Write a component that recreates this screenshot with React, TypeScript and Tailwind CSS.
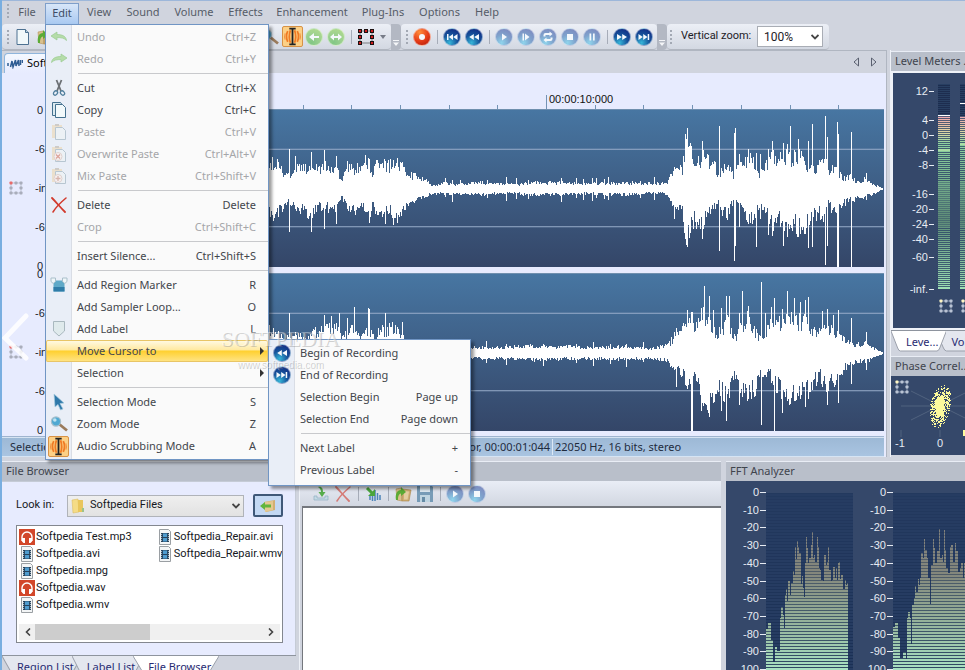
import { ReactNode } from 'react';
import clsx from 'clsx';

// ** Types **
type EnvelopePoint = [number, number, number];

interface MenuEntry {
  label: string;
  keys?: string;
  icon?: ReactNode;
  disabled?: boolean;
  hasSubmenu?: boolean;
  active?: boolean;
}

// ** Helpers **
const createRandom = (seed: number) => {
  let state = seed;
  return () => {
    state = (state * 16807) % 2147483647;
    return state / 2147483647;
  };
};

const buildWavePath = (envelope: EnvelopePoint[], spikes: EnvelopePoint[], seed: number) => {
  const random = createRandom(seed);
  let path = '';
  let index = 0;
  for (let x = envelope[0][0]; x < 884; x += 1) {
    while (index < envelope.length - 2 && x >= envelope[index + 1][0]) index += 1;
    const [x0, up0, down0] = envelope[index];
    const [x1, up1, down1] = envelope[index + 1];
    const ratio = (x - x0) / (x1 - x0);
    const spike = spikes.find((item) => item[0] === x);
    const up = Math.max((up0 + (up1 - up0) * ratio) * (0.6 + random() * 0.55), spike ? spike[1] : 0);
    const down = Math.max((down0 + (down1 - down0) * ratio) * (0.6 + random() * 0.55), spike ? spike[2] : 0);
    path += `M${x} ${Math.round(79 - up)}h1V${Math.round(80 + down)}h-1z`;
  }
  return path;
};

// ** Wave data: x, height above the axis, height below the axis **
const LEFT_ENVELOPE: EnvelopePoint[] = [
  [48, 20, 20], [271, 29, 28], [277, 28, 29], [280, 25, 25], [285, 15, 15], [292, 17, 17], [297, 22, 23], [305, 23, 26],
  [311, 22, 30], [318, 22, 19], [325, 24, 20], [330, 19, 22], [336, 22, 24], [341, 10, 10], [347, 24, 19],
  [355, 21, 24], [363, 28, 22], [369, 30, 28], [372, 15, 20], [376, 27, 24], [383, 26, 25], [390, 27, 26],
  [398, 28, 31], [403, 23, 26], [408, 16, 16], [415, 14, 12], [422, 11, 9], [428, 7, 7], [433, 4, 5],
  [445, 7, 6], [452, 5, 6], [465, 6, 5], [475, 8, 6], [485, 7, 6], [500, 6, 5], [515, 5, 5], [530, 7, 7],
  [545, 7, 6], [562, 7, 6], [575, 6, 5], [600, 6, 6], [625, 7, 6], [645, 6, 5], [660, 6, 4], [667, 8, 6],
  [671, 16, 14], [676, 20, 18], [682, 22, 24], [685, 48, 50], [690, 46, 50], [693, 22, 36], [698, 30, 35],
  [703, 34, 36], [708, 32, 28], [714, 28, 20], [718, 12, 12], [722, 25, 26], [728, 24, 28], [733, 14, 14],
  [738, 26, 20], [744, 26, 30], [748, 40, 42], [752, 34, 32], [757, 18, 22], [763, 18, 22], [768, 32, 30],
  [772, 40, 42], [776, 28, 30], [783, 42, 46], [790, 34, 36], [797, 38, 42], [804, 30, 42], [810, 20, 32],
  [818, 26, 26], [824, 36, 30], [829, 14, 14], [832, 22, 24], [838, 20, 24], [843, 12, 16], [850, 13, 12],
  [855, 10, 12], [859, 7, 8], [865, 12, 9], [870, 6, 7], [876, 4, 4], [884, 0, 0],
];

const LEFT_SPIKES: EnvelopePoint[] = [
  [289, 40, 43], [295, 33, 20], [311, 37, 43], [324, 39, 40], [336, 33, 35], [347, 28, 0], [365, 34, 0], [369, 30, 34],
  [385, 28, 35], [393, 28, 36], [401, 26, 20], [445, 11, 8], [452, 9, 13], [460, 9, 6], [487, 9, 9], [506, 12, 12], [516, 11, 10],
  [528, 9, 10], [561, 11, 13], [576, 11, 9], [583, 10, 11], [592, 11, 12], [596, 11, 9], [604, 10, 10], [608, 12, 11],
  [640, 8, 9], [654, 12, 11], [674, 22, 30], [686, 50, 55], [687, 61, 58], [702, 48, 50], [719, 63, 62], [734, 56, 72], [735, 61, 57],
  [739, 35, 38], [756, 36, 58], [760, 35, 30], [768, 40, 46], [772, 48, 40], [783, 42, 57], [787, 45, 48], [790, 63, 34],
  [798, 50, 48], [808, 48, 59], [812, 65, 58], [825, 73, 76], [827, 52, 57], [837, 67, 78], [838, 55, 78], [851, 57, 78],
  [866, 16, 11],
];

const RIGHT_ENVELOPE: EnvelopePoint[] = [
  [48, 20, 20], [271, 28, 20], [277, 25, 20], [285, 15, 18], [292, 20, 18], [299, 18, 20], [308, 16, 20], [318, 26, 22],
  [325, 30, 22], [337, 30, 22], [341, 14, 14], [347, 22, 20], [353, 26, 20], [360, 14, 16], [368, 30, 20],
  [373, 18, 16], [383, 26, 20], [392, 27, 22], [402, 22, 20], [407, 13, 14], [415, 13, 10], [425, 10, 8],
  [433, 5, 5], [470, 6, 6], [500, 6, 6], [530, 8, 8], [562, 7, 7], [600, 6, 6], [625, 7, 7], [650, 5, 6],
  [665, 8, 8], [670, 12, 12], [676, 22, 20], [682, 24, 26], [687, 36, 30], [692, 30, 26], [698, 32, 42],
  [704, 42, 48], [711, 32, 60], [717, 20, 40], [722, 28, 42], [727, 36, 44], [732, 20, 28], [736, 16, 22],
  [741, 30, 40], [748, 44, 46], [753, 26, 44], [758, 18, 32], [764, 20, 20], [770, 30, 24], [776, 30, 36],
  [783, 40, 50], [790, 36, 46], [797, 34, 44], [805, 38, 46], [812, 24, 34], [820, 22, 26], [826, 30, 34],
  [833, 26, 32], [840, 22, 24], [845, 12, 16], [855, 9, 10], [865, 11, 10], [872, 6, 7], [884, 0, 0],
];

const RIGHT_SPIKES: EnvelopePoint[] = [
  [289, 40, 30], [324, 38, 30], [331, 37, 20], [339, 40, 24], [347, 35, 24], [354, 46, 30], [368, 45, 25], [369, 44, 25],
  [385, 40, 25], [402, 31, 20], [486, 12, 10], [506, 9, 12], [543, 9, 13], [576, 9, 10], [593, 11, 13], [610, 9, 11],
  [626, 9, 14], [643, 11, 9], [676, 25, 34], [687, 43, 36], [691, 41, 78], [692, 41, 78], [701, 45, 58], [704, 67, 50], [709, 57, 64],
  [713, 43, 50], [721, 45, 58], [726, 57, 68], [729, 57, 45], [739, 40, 52], [742, 62, 44], [748, 44, 46], [761, 71, 72],
  [765, 40, 22], [771, 46, 30], [774, 55, 78], [782, 44, 60], [787, 62, 48], [794, 55, 48], [800, 51, 46], [805, 53, 54],
  [808, 56, 46], [822, 42, 34], [827, 44, 52], [833, 38, 30], [838, 43, 50], [851, 35, 31], [866, 21, 17],
];

// ** Spectrum data: x and y in thirds of a pixel **
const LEFT_SPECTRUM = [
  [0, 408], [7, 391], [15, 440], [21, 480], [22, 508], [27, 463], [34, 475], [42, 376], [45, 342], [51, 366], [54, 406],
  [57, 306], [60, 288], [63, 324], [66, 264], [72, 306], [75, 271], [81, 234], [84, 246], [87, 163], [90, 198],
  [93, 145], [96, 163], [100, 181], [104, 274], [108, 248], [111, 286], [114, 311], [117, 211], [120, 133], [123, 166],
  [126, 209], [130, 196], [134, 156], [138, 116], [141, 196], [145, 186], [148, 206], [152, 133], [155, 163],
  [158, 226], [162, 231], [165, 261], [170, 264], [174, 186], [179, 216], [183, 206], [186, 163], [189, 231],
  [194, 264], [199, 261], [202, 223], [206, 256], [209, 226], [212, 261], [215, 211], [218, 206], [222, 258],
  [226, 246], [231, 288], [236, 261], [240, 276], [243, 271], [246, 540],
];

const RIGHT_SPECTRUM = [
  [0, 401], [6, 391], [15, 436], [21, 494], [31, 476], [39, 498], [42, 376], [46, 356], [51, 376], [54, 454], [57, 336],
  [62, 316], [65, 278], [70, 296], [74, 258], [79, 276], [82, 256], [85, 181], [90, 196], [92, 138], [96, 171],
  [101, 196], [106, 256], [110, 334], [115, 216], [119, 138], [122, 166], [126, 211], [132, 174], [137, 109],
  [140, 196], [146, 186], [150, 206], [152, 111], [155, 171], [160, 226], [165, 241], [170, 161], [175, 156],
  [179, 206], [185, 151], [190, 174], [194, 236], [200, 226], [205, 211], [210, 256], [214, 211], [262, 540],
];

// ** Icons **
const BALL_TONES = {
  blue: 'bg-[radial-gradient(circle_at_35%_85%,#35b5d8,#16549b_45%,#10207e)]',
  pale: 'bg-[radial-gradient(circle_at_35%_85%,#8fd4ec,#7fa2cc_45%,#7c83bc)]',
  green: 'bg-[radial-gradient(circle_at_35%_85%,#82c784,#9bd090_45%,#b5dd8e)]',
  red: 'bg-[radial-gradient(circle_at_35%_20%,#ff8d3a,#e8401a_50%,#b01505)]',
};

const Ball = ({ tone, glyph }: { tone: keyof typeof BALL_TONES; glyph: ReactNode }) => (
  <span className={clsx('block w-[18px] h-[18px] rounded-full border border-white/50', BALL_TONES[tone])}>
    <svg viewBox="0 0 16 16" className="w-full h-full" fill="#f4f8fc">
      {glyph}
    </svg>
  </span>
);

const GLYPHS = {
  record: <circle cx="8" cy="8" r="3" />,
  begin: <path d="M3 5h1.5v6H3zM9 5v6L4.8 8zM13.5 5v6L9.2 8z" />,
  rewind: <path d="M7.8 5v6L3.2 8zM13 5v6L8.2 8z" />,
  play: <path d="M6 4.5v7L11 8z" />,
  playFrom: <path d="M4.5 4.5H6v7H4.5zM7 4.5v7L11.5 8z" />,
  loop: <path d="M3.5 7.5V6A2 2 0 0 1 5.5 4h4V2.5L12.5 5l-3 2.5V6h-4v1.5zM12.5 8.5V10a2 2 0 0 1-2 2h-4v1.5L3.5 11l3-2.5V10h4V8.5z" />,
  stop: <path d="M5 5h6v6H5z" />,
  pause: <path d="M5.5 4.5h1.7v7H5.5zM9 4.5h1.7v7H9z" />,
  forward: <path d="M3 5v6l4.8-3zM8.2 5v6L13 8z" />,
  end: <path d="M2.5 5v6l4.3-3zM7.2 5v6l4.3-3zM11.7 5h1.5v6h-1.5z" />,
  left: <path d="M8 4v3h5v2H8v3L3 8z" />,
  both: <path d="M6 4.5V7h4V4.5L14 8l-4 3.5V9H6v2.5L2 8z" />,
};

const PageIcon = () => (
  <svg viewBox="0 0 16 18" className="w-4 h-[18px]">
    <path d="M2 1.5h8.5l3 3v12H2z" fill="#f1f8fa" stroke="#4d7191" />
    <path d="M10.5 1.5v3h3" fill="#b8d2df" stroke="#4d7191" />
  </svg>
);

const FolderIcon = () => (
  <svg viewBox="0 0 18 18" className="w-[18px] h-[18px]">
    <path d="M2 4l5-1 1 13-5-1z" fill="#d9c08c" stroke="#b3945a" strokeWidth=".6" />
    <path d="M8 4l9 1-2 11H8z" fill="#cfae74" stroke="#a98343" strokeWidth=".6" />
    <path d="M10 6l5 .5-1.500 8H10z" fill="#e3cda0" />
    <path d="M2 15C1 9 3 5 7 5V2l5 5-5 4V8.500C4.500 9 4 12 4 15z" fill="#5cab35" />
  </svg>
);

const UndoIcon = ({ flip }: { flip?: boolean }) => (
  <svg viewBox="0 0 18 12" className={clsx('w-[18px] h-3', flip && '-scale-x-100')}>
    <path d="M1 5l6-4v2.500c5 0 9 1.500 9.500 6C14 7 11 6.500 7 6.600V9z" fill="#b5dca9" stroke="#9acb91" strokeWidth=".7" />
  </svg>
);

const CutIcon = () => (
  <svg viewBox="0 0 14 18" className="w-3.5 h-[18px]" fill="none">
    <path d="M4.500 1l4.500 11M9.500 1L5 12" stroke="#6d7175" strokeWidth="1.800" />
    <ellipse cx="3.500" cy="14" rx="1.800" ry="2.400" stroke="#4f7e9c" strokeWidth="1.300" transform="rotate(40 3.500 14)" />
    <ellipse cx="10.500" cy="14" rx="1.800" ry="2.400" stroke="#4f7e9c" strokeWidth="1.300" transform="rotate(-40 10.500 14)" />
  </svg>
);

const CopyIcon = () => (
  <svg viewBox="0 0 16 18" className="w-4 h-[18px]" stroke="#44718f">
    <path d="M1.500 1.500h8l1.500 2v11h-9.500z" fill="#dceaf0" />
    <path d="M4.500 3.500h7l3 3v10h-10z" fill="#f2f9fb" />
  </svg>
);

const PasteIcon = ({ mark }: { mark?: 'cross' | 'plus' }) => (
  <svg viewBox="0 0 18 18" className="w-[18px] h-[18px] opacity-75">
    <path d="M2 2h10v13H2z" fill="#ecdcc0" />
    <path d="M5 1h4v2H5z" fill="#c5c0b8" />
    <path d="M5.500 4.500h7l3 3v9h-10z" fill="#eef3f5" stroke="#a7b9c5" />
    {mark && <circle cx="8" cy="11.500" r="4" fill="#faf3f0" stroke="#dcc8c2" />}
    {mark === 'cross' && <path d="M6 9.500l4 4M10 9.500l-4 4" stroke="#d98a7c" strokeWidth="1.300" />}
    {mark === 'plus' && <path d="M8 9v5M5.500 11.500h5" stroke="#d3a296" strokeWidth="1.300" />}
  </svg>
);

const DeleteIcon = ({ faded }: { faded?: boolean }) => (
  <svg viewBox="0 0 16 16" className={clsx('w-4 h-4', faded && 'opacity-60')} fill="none" stroke="#d23a2c" strokeLinecap="round">
    <path d="M1 1c4 4 8 9 13 14" strokeWidth="1.800" />
    <path d="M15 1C9 6 5 10 2 15" strokeWidth="1.500" />
  </svg>
);

const RegionMarkerIcon = () => (
  <svg viewBox="0 0 18 16" className="w-[18px] h-4">
    <path d="M3.500 3.500h11v11h-11z" fill="#5fa9c8" />
    <path d="M3.500 10h11v4.500h-11z" fill="#2f7ca8" />
    <path d="M1 1h4.500v3.500L3.200 6.500 1 4.500zM12.500 1H17v3.500l-2.200 2-2.300-2z" fill="#eff6f9" stroke="#a9bfca" />
  </svg>
);

const LabelIcon = () => (
  <svg viewBox="0 0 14 18" className="w-3.5 h-[18px]">
    <path d="M1.500 1.500h11V11L7 16 1.500 11z" fill="#dfeaec" stroke="#a9b8bf" />
  </svg>
);

const PointerIcon = () => (
  <svg viewBox="0 0 14 18" className="w-3.5 h-[18px]">
    <path d="M2 1l10 9-4 .500L11 16l-2.500 1L6 11.500 3 14z" fill="#2f79aa" stroke="#a6cbe0" strokeWidth=".7" />
  </svg>
);

const MagnifierIcon = () => (
  <svg viewBox="0 0 18 16" className="w-[18px] h-4">
    <path d="M9 8l8 6.500" stroke="#9a7b5c" strokeWidth="2.800" />
    <circle cx="6" cy="5.500" r="4.600" fill="#4fa9d3" stroke="#a5bfcd" strokeWidth="1.200" />
    <circle cx="4.800" cy="4" r="1.800" fill="#bfe3f1" />
  </svg>
);

const ScrubIcon = () => (
  <span className="block w-[21px] h-[21px] bg-[#fcd086] border border-[#d79246] rounded-xs">
    <svg viewBox="0 0 18 18" className="w-full h-full" fill="none">
      <path d="M4.500 4Q2 9 4.500 14M7 3Q5 9 7 15M13.500 4Q16 9 13.500 14M11 3Q13 9 11 15" stroke="#f07a22" strokeWidth="1.700" />
      <path d="M2 6Q1 9 2 12M16 6Q17 9 16 12" stroke="#f3913f" />
      <path d="M6 1.500h6M6 16.500h6M9 1.500v15" stroke="#222" strokeWidth="1.700" />
    </svg>
  </span>
);

// ** Eight small squares joined by a thin frame **
const ChannelGrid = ({ tone = '#b9c3d4', first = '#fff6c4', last = '#b9c3d4' }) => (
  <svg viewBox="0 0 14 14" className="w-3.5 h-3.5 shrink-0">
    <path d="M2 2h10v10H2z" fill="none" stroke={tone} strokeWidth=".6" />
    {[[0, 0], [5, 0], [10, 0], [0, 5], [10, 5], [0, 10], [5, 10], [10, 10]].map(([x, y], index) => (
      <rect
        key={`${x}-${y}`}
        x={x + 0.5}
        y={y + 0.5}
        width="3"
        height="3"
        rx=".8"
        fill={index === 0 ? first : index === 2 ? last : tone}
      />
    ))}
  </svg>
);

const RegionGridIcon = () => (
  <svg viewBox="0 0 18 18" className="w-[18px] h-[18px]">
    <path d="M3 3h12v12H3z" fill="none" stroke="#555" strokeWidth=".7" />
    {[[1, 1], [7, 1], [13, 1], [1, 7], [13, 7], [1, 13], [13, 13]].map(([x, y]) => (
      <g key={`${x}-${y}`}>
        <rect x={x} y={y} width="4" height="4" fill="#1c1010" />
        <rect x={x + 1} y={y + 1} width="2" height="2" fill="#d01c1c" />
      </g>
    ))}
  </svg>
);

const AudioFileIcon = () => (
  <svg viewBox="0 0 16 16" className="w-4 h-4 shrink-0">
    <path d="M0 0h16v16H0z" fill="#d2472a" />
    <path d="M3 12V8a5 5 0 0 1 10 0v4" fill="none" stroke="#fff" strokeWidth="1.400" />
    <path d="M3 9h3v5H4.500L3 12.500zM10 9h3v3.500L11.500 14H10z" fill="#fff" />
  </svg>
);

const VideoFileIcon = () => (
  <svg viewBox="0 0 16 16" className="w-4 h-4 shrink-0">
    <path d="M2.500.500h9l2 2v13h-11z" fill="#f3f5f6" stroke="#9a9fa3" />
    <path d="M4 4h8v9H4z" fill="#25425c" />
    <path d="M6 4.500h4V8H6zM6 9h4v3.500H6z" fill="#4f9ccf" />
    <path d="M4.600 5v7M11.400 5v7" stroke="#dfe6ea" strokeWidth=".8" strokeDasharray="1 1" />
  </svg>
);

const SaveIcon = () => (
  <svg viewBox="0 0 18 18" className="w-[18px] h-[18px] opacity-80">
    <path d="M1 1h15l1 1v15H1z" fill="#5e8bab" />
    <path d="M4 1h10v6H4z" fill="#dceaf1" />
    <path d="M4 10h10v7H4z" fill="#b9d3e0" />
    <path d="M6 12h3v5H6z" fill="#4a7896" />
  </svg>
);

const AddToListIcon = () => (
  <svg viewBox="0 0 18 16" className="w-[18px] h-4">
    <path d="M2 10v4h14v-4h-3v2H5v-2z" fill="#c5dbe5" stroke="#8fb0c1" strokeWidth=".7" />
    <path d="M6 1c4-1 5 2 5 5h2.500L10 11 6.500 6H9c0-2-1-4-3-5z" fill="#57ad4c" />
  </svg>
);

const WaveOpenIcon = () => (
  <svg viewBox="0 0 18 16" className="w-[18px] h-4" fill="none">
    <path d="M6 10v4M8.500 8v7M11 4v11M13.500 7v7M16 9v5" stroke="#4b83b8" strokeWidth="1.500" />
    <path d="M3 2l6 6" stroke="#4aa53c" strokeWidth="3" />
    <path d="M11 3v7H4z" fill="#4aa53c" />
  </svg>
);

// ** Shared pieces **
const Grip = () => (
  <span className="flex flex-col gap-0.5 px-[3px]">
    {[0, 1, 2, 3].map((dot) => (
      <span key={dot} className="w-0.5 h-0.5 bg-[#a3a9b4]" />
    ))}
  </span>
);

const Divider = () => <span className="w-2 h-3.5 flex justify-center before:w-px before:h-full before:bg-[#a6acb8]" />;

const Chevron = () => (
  <svg viewBox="0 0 8 6" className="absolute right-1 w-2 h-1.5 pointer-events-none" fill="none" stroke="#444" strokeWidth="1.800">
    <path d="M.500 1L4 4.500 7.500 1" />
  </svg>
);

const ToolButton = ({ label, children }: { label: string; children: ReactNode }) => (
  <button aria-label={label} className="w-[22px] h-[22px] flex items-center justify-center shrink-0">
    {children}
  </button>
);

const Overflow = () => (
  <button aria-label="Toolbar options" className="w-2.5 h-[26px] bg-[#b3b8c3] rounded-r-sm flex items-end justify-center pb-1">
    <svg viewBox="0 0 6 6" className="w-1.5 h-1.5" fill="#f4f5f8">
      <path d="M0 0h6v1H0zM0 2.500h6L3 6z" />
    </svg>
  </button>
);

const PanelTitle = ({ title, closable }: { title: string; closable?: boolean }) => (
  <h2 className="h-5 shrink-0 px-1 flex items-center justify-between bg-[#b9bfca] border-t border-[#e9edf5] text-[11px] text-[#3f444d] whitespace-nowrap overflow-hidden">
    {title}
    {closable && (
      <button aria-label={`Close ${title || 'panel'}`}>
        <svg viewBox="0 0 9 9" className="w-[9px] h-[9px]" stroke="#6b7079" strokeWidth="1.400">
          <path d="M1 1l7 7M8 1L1 8" />
        </svg>
      </button>
    )}
  </h2>
);

const MenuPanel = ({ groups, children, className }: { groups: MenuEntry[][]; children?: ReactNode; className: string }) => (
  <div
    role="menu"
    className={clsx(
      'absolute z-10 border border-[#7095c4] shadow-[3px_3px_3px_#00000066] bg-[linear-gradient(to_right,#e9eef7_25px,#d9dde5_25px,#d9dde5_26px,#fafafa_26px)]',
      className,
    )}
  >
    {groups.map((group, index) => (
      <div key={group[0].label}>
        {index > 0 && <div className="h-[7px] ml-8 flex items-center before:h-px before:w-full before:bg-[#c8c9cc]" />}
        {group.map((entry) => (
          <button
            key={entry.label}
            role="menuitem"
            disabled={entry.disabled}
            className={clsx(
              'w-full h-[22px] flex items-center text-[11px] whitespace-nowrap',
              entry.disabled ? 'text-[#a5a6a9]' : 'text-[#43464c]',
              entry.active && 'rounded-xs shadow-[inset_0_0_0_1px_#e8c566] bg-[linear-gradient(#fffbe8,#ffe9a0_45%,#ffd02f_50%,#ffe58a)]',
            )}
          >
            <span className="w-[25px] flex justify-center">{entry.icon}</span>
            <span className="pl-1.5 flex-1 text-left">{entry.label}</span>
            <span className={entry.hasSubmenu ? 'pr-1' : 'pr-3'}>
              {entry.hasSubmenu ? (
                <svg viewBox="0 0 4 8" className="w-1 h-2" fill="#333">
                  <path d="M0 0l4 4-4 4z" />
                </svg>
              ) : (
                entry.keys
              )}
            </span>
          </button>
        ))}
      </div>
    ))}
    {children}
  </div>
);

const EDIT_MENU: MenuEntry[][] = [
  [
    { label: 'Undo', keys: 'Ctrl+Z', disabled: true, icon: <UndoIcon /> },
    { label: 'Redo', keys: 'Ctrl+Y', disabled: true, icon: <UndoIcon flip /> },
  ],
  [
    { label: 'Cut', keys: 'Ctrl+X', icon: <CutIcon /> },
    { label: 'Copy', keys: 'Ctrl+C', icon: <CopyIcon /> },
    { label: 'Paste', keys: 'Ctrl+V', disabled: true, icon: <PasteIcon /> },
    { label: 'Overwrite Paste', keys: 'Ctrl+Alt+V', disabled: true, icon: <PasteIcon mark="cross" /> },
    { label: 'Mix Paste', keys: 'Ctrl+Shift+V', disabled: true, icon: <PasteIcon mark="plus" /> },
  ],
  [
    { label: 'Delete', keys: 'Delete', icon: <DeleteIcon /> },
    { label: 'Crop', keys: 'Ctrl+Shift+C', disabled: true },
  ],
  [{ label: 'Insert Silence...', keys: 'Ctrl+Shift+S' }],
  [
    { label: 'Add Region Marker', keys: 'R', icon: <RegionMarkerIcon /> },
    { label: 'Add Sampler Loop...', keys: 'O' },
    { label: 'Add Label', keys: 'L', icon: <LabelIcon /> },
    { label: 'Move Cursor to', hasSubmenu: true, active: true },
    { label: 'Selection', hasSubmenu: true },
  ],
  [
    { label: 'Selection Mode', keys: 'S', icon: <PointerIcon /> },
    { label: 'Zoom Mode', keys: 'Z', icon: <MagnifierIcon /> },
    { label: 'Audio Scrubbing Mode', keys: 'A', icon: <ScrubIcon /> },
  ],
];

const CURSOR_MENU: MenuEntry[][] = [
  [
    { label: 'Begin of Recording', icon: <Ball tone="blue" glyph={GLYPHS.rewind} /> },
    { label: 'End of Recording', icon: <Ball tone="blue" glyph={GLYPHS.end} /> },
    { label: 'Selection Begin', keys: 'Page up' },
    { label: 'Selection End', keys: 'Page down' },
  ],
  [
    { label: 'Next Label', keys: '+' },
    { label: 'Previous Label', keys: '-' },
  ],
];

const MENU_BAR = [
  { label: 'File', width: 'w-9' },
  { label: 'Edit', width: 'w-[34px]' },
  { label: 'View', width: 'w-10' },
  { label: 'Sound', width: 'w-12' },
  { label: 'Volume', width: 'w-[54px]' },
  { label: 'Effects', width: 'w-[49px]' },
  { label: 'Enhancement', width: 'w-[84px]' },
  { label: 'Plug-Ins', width: 'w-[58px]' },
  { label: 'Options', width: 'w-[55px]' },
  { label: 'Help', width: 'w-10' },
];

const MenuBar = () => (
  <nav className="h-6 flex items-end pl-[5px] border-t border-[#9db7da] text-[11px] text-[#565c68]">
    <span className="pb-1.5 -mx-[3px]">
      <Grip />
    </span>
    {MENU_BAR.map(({ label, width }) => (
      <div key={label} className={clsx('relative h-[21px]', width)}>
        <button
          className={clsx(
            'w-full h-full pb-0.5 text-center',
            label === 'Edit' && 'bg-linear-to-b from-[#d8e6f8] to-[#a9c9f1] border border-b-0 border-[#7f9fca] text-[#3d4c66]',
          )}
        >
          {label}
        </button>
        {label === 'Edit' && (
          <MenuPanel groups={EDIT_MENU} className="left-0 top-full w-56 pt-px pb-0.5">
            <MenuPanel groups={CURSOR_MENU} className="left-[222px] top-[314px] w-[203px] pt-0.5 pb-1" />
          </MenuPanel>
        )}
      </div>
    ))}
  </nav>
);

const Toolbars = () => {
  const barClass = 'h-[26px] flex items-center rounded-sm bg-linear-to-b from-[#eceff6] to-[#d3d8e2] border-b border-[#b1b6c0]';
  return (
    <div className="flex h-[26px]">
      <div className={clsx(barClass, 'pl-0.5 w-[389px]')}>
        <Grip />
        <ToolButton label="New"><PageIcon /></ToolButton>
        <ToolButton label="Open"><FolderIcon /></ToolButton>
        <div className="ml-auto flex items-center pr-0.5">
          <ToolButton label="Zoom mode"><MagnifierIcon /></ToolButton>
          <ToolButton label="Scrubbing mode"><ScrubIcon /></ToolButton>
          <ToolButton label="Back"><Ball tone="green" glyph={GLYPHS.left} /></ToolButton>
          <ToolButton label="Fit"><Ball tone="green" glyph={GLYPHS.both} /></ToolButton>
          <Divider />
          <ToolButton label="Channels"><RegionGridIcon /></ToolButton>
          <button aria-label="Channel options" className="w-3 flex justify-center">
            <svg viewBox="0 0 6 4" className="w-1.5 h-1" fill="#777c88"><path d="M0 0h6L3 4z" /></svg>
          </button>
        </div>
      </div>
      <Overflow />
      <div className={clsx(barClass, 'pl-0.5 pr-0.5')}>
        <Grip />
        <ToolButton label="Record"><Ball tone="red" glyph={GLYPHS.record} /></ToolButton>
        <Divider />
        <ToolButton label="Go to begin"><Ball tone="blue" glyph={GLYPHS.begin} /></ToolButton>
        <ToolButton label="Rewind"><Ball tone="blue" glyph={GLYPHS.rewind} /></ToolButton>
        <Divider />
        <ToolButton label="Play"><Ball tone="pale" glyph={GLYPHS.play} /></ToolButton>
        <ToolButton label="Play from cursor"><Ball tone="pale" glyph={GLYPHS.playFrom} /></ToolButton>
        <ToolButton label="Loop"><Ball tone="pale" glyph={GLYPHS.loop} /></ToolButton>
        <ToolButton label="Stop"><Ball tone="pale" glyph={GLYPHS.stop} /></ToolButton>
        <ToolButton label="Pause"><Ball tone="pale" glyph={GLYPHS.pause} /></ToolButton>
        <Divider />
        <ToolButton label="Fast forward"><Ball tone="blue" glyph={GLYPHS.forward} /></ToolButton>
        <ToolButton label="Go to end"><Ball tone="blue" glyph={GLYPHS.end} /></ToolButton>
      </div>
      <Overflow />
      <div className={clsx(barClass, "pr-1.5 text-[11px] text-[#1d2026] font-['Roboto',sans-serif]")}>
        <Grip />
        <label htmlFor="vertical-zoom" className="pl-1.5 w-[82px] whitespace-nowrap">Vertical zoom:</label>
        <span className="relative flex items-center">
          <select id="vertical-zoom" className="appearance-none w-[66px] h-[21px] pl-1.5 bg-white border border-[#a9adb5] text-[12px]">
            <option>100%</option>
          </select>
          <Chevron />
        </span>
      </div>
    </div>
  );
};

const Scale = () => (
  <div className="w-[54px] pl-[7px] h-[158px] flex items-center gap-3 font-['Liberation_Sans',sans-serif] text-[11px] text-[#20242c]">
    <ChannelGrid tone="#a9adbb" first="#e86a6a" last="#a9adbb" />
    <span className="h-[168px] -my-1 flex flex-col justify-between leading-3 shrink-0">
      <span className="pl-0.5">0</span>
      <span>-6</span>
      <span>-inf.</span>
      <span>-6</span>
      <span className="pl-0.5">0</span>
    </span>
  </div>
);

const Wave = ({ path }: { path: string }) => (
  <div className="flex">
    <Scale />
    <svg
      viewBox="56 0 828 158"
      preserveAspectRatio="none"
      className="flex-1 min-w-0 h-[158px] bg-linear-to-b from-[#4776a2] to-[#344668] border-t border-[#6f8fae]"
      shapeRendering="crispEdges"
    >
      <path d="M48 39.500H884M48 117.500H884" stroke="#9aaecb" />
      <path d={path} fill="#fff" />
    </svg>
  </div>
);

const Editor = () => (
  <section className="flex-1 min-w-0 flex flex-col border-t border-r border-[#b0b6c1] pr-0.5 bg-[#e7ebfe]">
    <div className="h-[22px] -mr-0.5 flex items-end justify-between bg-[#d0d4de] pl-0.5 pr-2">
      <button className="h-5 w-36 flex items-center gap-1 pl-0.5 rounded-t-sm border border-b-0 border-[#8fb5dc] bg-linear-to-b from-[#f4f8ff] to-[#e7ebfe] text-[11px]">
        <svg viewBox="0 0 16 10" className="w-4 h-2.5" fill="none" stroke="#2e5c93" strokeWidth="1.500">
          <path d="M1 4v3M3.500 8l1.500-6 1 6 2.500-7 .500 6 2.500-6 .500 6M13.500 1v5M15.500 1v3" />
        </svg>
        Softpedia
      </button>
      <span className="flex items-center gap-2.5 pb-1.5">
        {['Scroll left', 'Scroll right'].map((label, index) => (
          <button key={label} aria-label={label}>
            <svg viewBox="0 0 8 10" className={clsx('w-2 h-2.5', index === 1 && '-scale-x-100')} fill="none" stroke="#5a6070">
              <path d="M6.500 1v8L2 5z" />
            </svg>
          </button>
        ))}
      </span>
    </div>
    <div className="flex h-9">
      <span className="w-[54px]" />
      <svg className="flex-1 min-w-0 h-9 overflow-hidden" shapeRendering="crispEdges">
        {Array.from({ length: 17 }, (_, index) => {
          const x = Math.round(3 + index * 48.7);
          return <path key={index} d={`M${x} ${index === 10 ? 22 : 32}V36`} stroke="#7393b5" />;
        })}
        <text x="493" y="30" fontSize="11" fontFamily="Liberation Sans" fill="#111">00:00:10:000</text>
      </svg>
    </div>
    <Wave path={buildWavePath(LEFT_ENVELOPE, LEFT_SPIKES, 71)} />
    <div className="h-1.5" />
    <Wave path={buildWavePath(RIGHT_ENVELOPE, RIGHT_SPIKES, 29)} />
    <div className="h-1.5 border-b border-[#9fb4cf]" />
    <div className="h-5 flex items-center pl-2 bg-linear-to-b from-[#9db9d6] to-[#a9c4e1] border-y border-[#d6e4f3] text-[11px] text-[#1f2c3d]">
      <span className="flex-1 max-w-[543px] flex justify-between pr-0.5 border-r border-[#dbe8f5]">
        <span>Selection</span>
        <span>Cursor, 00:00:01:044</span>
      </span>
      <span className="pl-0.5">22050 Hz, 16 bits, stereo</span>
    </div>
  </section>
);

const METER_MARKS: [string, number][] = [
  ['12', 18], ['4', 47], ['0', 62], ['-4', 77], ['-8', 92], ['-16', 121], ['-20', 136], ['-24', 151], ['-40', 166], ['-60', 184], ['-inf.', 216],
];

const Meter = ({ x, level, peak }: { x: number; level: number; peak: number }) => (
  <g shapeRendering="crispEdges">
    <rect x={x} y="11" width="12" height="205" fill="#1d2d4f" />
    <rect x={x} y="43" width="12" height="173" fill="url(#meter)" />
    {Array.from({ length: 102 }, (_, row) => (
      <path key={row} d={`M${x} ${row * 2 + 11.5}h12`} stroke="#2c4466" strokeOpacity={row > 48 && row < 72 ? 0.45 : 0.8} />
    ))}
    <path d={`M${x} ${level}h12`} stroke="#fff" />
    <path d={`M${x} ${peak}h12`} stroke="#a9dca5" strokeWidth="2" />
  </g>
);

const LevelMeters = () => (
  <div className="h-[259px] shrink-0 bg-[#35486a] border-2 border-r-0 border-[#eff2f8] overflow-hidden">
    <svg className="w-[110px] h-full">
      <defs>
        <linearGradient id="meter" x1="0" y1="0" x2="0" y2="1">
          <stop offset="0" stopColor="#f0a9b4" />
          <stop offset=".05" stopColor="#e6c0a5" />
          <stop offset=".1" stopColor="#d9d9a5" />
          <stop offset=".16" stopColor="#8fd3a0" />
          <stop offset=".6" stopColor="#5e8c78" />
          <stop offset="1" stopColor="#9fe0b4" />
        </linearGradient>
      </defs>
      {METER_MARKS.map(([text, y]) => (
        <g key={text}>
          <text x="35" y={y + 4} textAnchor="end" fontSize="11" fontFamily="Liberation Sans" fill="#e6ebf3">{text}</text>
          <path d={`M36 ${y + 0.5}h5`} stroke="#e6ebf3" />
        </g>
      ))}
      <Meter x={45} level={42.5} peak={77} />
      <Meter x={67} level={30.5} peak={71} />
      {[46, 68].map((x) => (
        <svg key={x} x={x} y="226" width="14" height="14">
          <ChannelGrid />
        </svg>
      ))}
    </svg>
  </div>
);

const PhaseScope = () => {
  const random = createRandom(417);
  const dots = Array.from({ length: 560 }, () => {
    const angle = random() * Math.PI * 2;
    const radius = Math.pow(random(), 0.8);
    const y = Math.sin(angle) * radius * 21;
    return [Math.round(49 + Math.cos(angle) * radius * 10 - y * 0.15), Math.round(30 + y)];
  });
  return (
    <div className="h-[79px] shrink-0 bg-[#35486a] overflow-hidden">
      <svg className="w-[110px] h-full">
        <path d="M20 15l58 29M10 30h78M20 44l58-29" stroke="#50627f" />
        <path d="M10 54v7M49 54v7" stroke="#50627f" />
        <g fill="#fdfb9c" shapeRendering="crispEdges">
          {dots.map(([x, y], index) => (
            <rect key={index} x={x} y={y} width="1" height="1" />
          ))}
          <path d="M44 25l4-4 4-2 2 6-1 7-3 8-4 2-1-7z" />
          <path d="M72 54h6v6h-6z" />
        </g>
        <g fontSize="11" fontFamily="Liberation Sans" fill="#e6ebf3">
          <text x="4" y="71">-1</text>
          <text x="46" y="71">0</text>
        </g>
        <svg x="4" y="4" width="14" height="14">
          <ChannelGrid />
        </svg>
      </svg>
    </div>
  );
};

const TabStrip = ({ tabs, active }: { tabs: string[]; active: number }) => (
  <div className="flex shrink-0 text-[11px] text-[#272a72] border-t border-[#8e949e] overflow-hidden">
    {tabs.map((tab, index) => (
      <button
        key={tab}
        className={clsx('relative h-[21px] pt-0.5 pl-[15px] pr-2 -mr-2.5 shrink-0 whitespace-nowrap', index === active && 'z-1')}
      >
        <svg viewBox="0 0 100 21" preserveAspectRatio="none" className="absolute inset-0 w-full h-full">
          <path
            d="M0 0l12 17q2 3 5 3h66q3 0 5-3L100 0"
            fill={index === active ? '#fff' : '#e4e7ef'}
            stroke="#9ba0ab"
            vectorEffect="non-scaling-stroke"
          />
        </svg>
        <span className="relative">{tab}</span>
      </button>
    ))}
  </div>
);

const FILES = [
  'Softpedia Test.mp3', 'Softpedia.avi', 'Softpedia.mpg', 'Softpedia.wav', 'Softpedia.wmv', 'Softpedia_Repair.avi', 'Softpedia_Repair.wmv',
];

const FileBrowser = () => (
  <section className="w-[294px] flex flex-col shrink-0">
    <PanelTitle title="File Browser" />
    <div className="h-[174px] shrink-0 pl-3.5 pr-3 pt-3 bg-[#e7ebfe] border-r border-t border-[#c5cbd6] text-[11px] text-[#15181d] font-['Roboto',sans-serif]">
      <div className="flex items-center">
        <label htmlFor="look-in" className="w-[51px]">Look in:</label>
        <span className="relative flex flex-1 items-center">
          <svg viewBox="0 0 14 16" className="absolute left-1 w-3.5 h-4">
            <path d="M1 2l6-1 1 13-6 1z" fill="#f5dc86" stroke="#d9b95a" strokeWidth=".5" />
            <path d="M7 2h5v12H7z" fill="#e9c65c" />
            <path d="M11 10h2v4h-2z" fill="#9cc38a" />
          </svg>
          <select id="look-in" className="appearance-none w-full h-[22px] pl-[22px] border border-[#b0b3b9] bg-linear-to-b from-[#efefef] to-[#e2e2e2]">
            <option>Softpedia Files</option>
          </select>
          <Chevron />
        </span>
        <button aria-label="Up one folder" className="ml-[9px] w-[30px] h-[23px] flex items-center justify-center rounded-xs border-2 border-[#3f5878] bg-[#c3d8f3]">
          <svg viewBox="0 0 18 14" className="w-[18px] h-3.5">
            <path d="M5 3l11-2v10l-9 2z" fill="#d3af72" />
            <path d="M5 3l9-1v9l-8 2z" fill="#e4c88f" />
            <path d="M1 7l5-4v2.500h6v3H6V11z" fill="#62b53c" />
          </svg>
        </button>
      </div>
      <div className="mt-2 h-[118px] p-0.5 flex flex-col justify-between bg-white border border-[#83878f] overflow-hidden">
        <ul className="h-[90px] w-max flex flex-col flex-wrap gap-x-6 content-start">
          {FILES.map((file) => (
            <li key={file} className="h-[17px]">
              <button className="flex items-center leading-[17px]">
                {/\.(mp3|wav)$/.test(file) ? <AudioFileIcon /> : <VideoFileIcon />}
                <span className="px-px">{file}</span>
              </button>
            </li>
          ))}
        </ul>
        <div className="h-4 flex items-center justify-between px-1.5 bg-[#f0f0f0]">
          <svg viewBox="0 0 6 8" className="w-1.5 h-2" fill="none" stroke="#444" strokeWidth="1.600"><path d="M5 .5L1.500 4 5 7.500" /></svg>
          <span className="flex-1 px-1"><span className="block w-[115px] h-4 bg-[#cdcdcd]" /></span>
          <svg viewBox="0 0 6 8" className="w-1.5 h-2" fill="none" stroke="#444" strokeWidth="1.600"><path d="M1 .5L4.500 4 1 7.500" /></svg>
        </div>
      </div>
    </div>
    <TabStrip tabs={['Region List', 'Label List', 'File Browser']} active={2} />
  </section>
);

const PlayList = () => (
  <section className="flex-1 min-w-0 -ml-px mr-px flex flex-col border-l border-[#eef1f7]">
    <PanelTitle title="" closable />
    <div className="h-[25px] shrink-0 pl-2.5 flex items-center bg-linear-to-b from-[#e9edf6] to-[#d2d7e1]">
      <ToolButton label="Add to list"><AddToListIcon /></ToolButton>
      <ToolButton label="Remove"><DeleteIcon faded /></ToolButton>
      <Divider />
      <ToolButton label="Open in editor"><WaveOpenIcon /></ToolButton>
      <Divider />
      <ToolButton label="Load list"><FolderIcon /></ToolButton>
      <ToolButton label="Save list"><SaveIcon /></ToolButton>
      <Divider />
      <ToolButton label="Play"><Ball tone="pale" glyph={GLYPHS.play} /></ToolButton>
      <ToolButton label="Stop"><Ball tone="pale" glyph={GLYPHS.stop} /></ToolButton>
    </div>
    <div className="flex-1 ml-0.5 bg-white border-t-2 border-l border-[#74777d]" />
  </section>
);

const Spectrum = ({ points, x, width }: { points: number[][]; x: number; width: number }) => {
  const shape = points.map(([px, py]) => `H${Math.round(x + px / 3)}V${Math.round(12 + py / 3)}`).join('');
  return (
    <g shapeRendering="crispEdges">
      {Array.from({ length: 11 }, (_, index) => {
        const y = Math.round(11 + index * 17.7);
        return (
          <g key={index}>
            <text x={x - 7} y={y + 4} textAnchor="end" fontSize="11" fontFamily="Liberation Sans" fill="#e6ebf3">
              {index === 0 ? '0' : `-${index * 10}`}
            </text>
            <path d={`M${x - 6} ${y + 0.5}h6`} stroke="#e6ebf3" />
          </g>
        );
      })}
      <rect x={x} y="12" width={width} height="190" fill="#263c62" />
      <path d={`M${x} 202${shape}V202z`} fill="url(#spectrum)" />
      {Array.from({ length: 64 }, (_, row) => (
        <path key={row} d={`M${x} ${row * 3 + 12.5}h${width}`} stroke="#192e52" strokeOpacity={0.2 + row / 90} />
      ))}
    </g>
  );
};

const FftAnalyzer = () => (
  <section className="w-[239px] flex flex-col shrink-0 overflow-hidden">
    <PanelTitle title="FFT Analyzer" />
    <div className="flex-1 bg-[#35486a] overflow-hidden">
      <svg className="w-[260px] h-[202px]">
        <defs>
          <linearGradient id="spectrum" gradientUnits="userSpaceOnUse" x1="0" y1="50" x2="0" y2="190">
            <stop offset="0" stopColor="#80807c" />
            <stop offset=".3" stopColor="#84877c" />
            <stop offset=".65" stopColor="#96b39b" />
            <stop offset="1" stopColor="#a9e3c3" />
          </linearGradient>
        </defs>
        <Spectrum points={LEFT_SPECTRUM} x={40} width={87} />
        <Spectrum points={RIGHT_SPECTRUM} x={167} width={87} />
      </svg>
    </div>
  </section>
);

const App = () => {
  return (
    <main className="relative h-screen min-h-96 flex flex-col overflow-hidden bg-[#d0d4de] border-l-2 border-[#79aee0] font-['Noto_Sans',sans-serif]">
      <MenuBar />
      <Toolbars />
      <div className="flex shrink-0">
        <Editor />
        <aside className="w-[75px] ml-[3px] pt-px flex flex-col overflow-hidden border-l border-[#eef1f7]">
          <PanelTitle title="Level Meters ..." />
          <LevelMeters />
          <TabStrip tabs={['Leve...', 'Volume']} active={0} />
          <div className="h-1 shrink-0" />
          <PanelTitle title="Phase Correl..." />
          <PhaseScope />
        </aside>
      </div>
      <div className="mt-1 flex-1 min-h-0 flex gap-1">
        <FileBrowser />
        <PlayList />
        <FftAnalyzer />
      </div>
      <button aria-label="Previous" className="absolute left-0 top-[312px] z-20">
        <svg viewBox="0 0 28 50" className="w-7 h-[50px]" fill="none" stroke="#fff" strokeOpacity=".85" strokeWidth="5" strokeLinecap="round">
          <path d="M24 4L3 26l21 20" />
        </svg>
      </button>
      <div className="absolute left-[219px] top-[329px] z-20 text-center pointer-events-none font-['Liberation_Serif',serif] text-white/40 [text-shadow:1px_1px_0_#88888866]">
        <p className="text-[22px] leading-5">SOFTPEDIA</p>
        <p className="pt-1 text-[10px] leading-6 font-['Liberation_Sans',sans-serif]">www.softpedia.com</p>
      </div>
    </main>
  );
};

export default App;
